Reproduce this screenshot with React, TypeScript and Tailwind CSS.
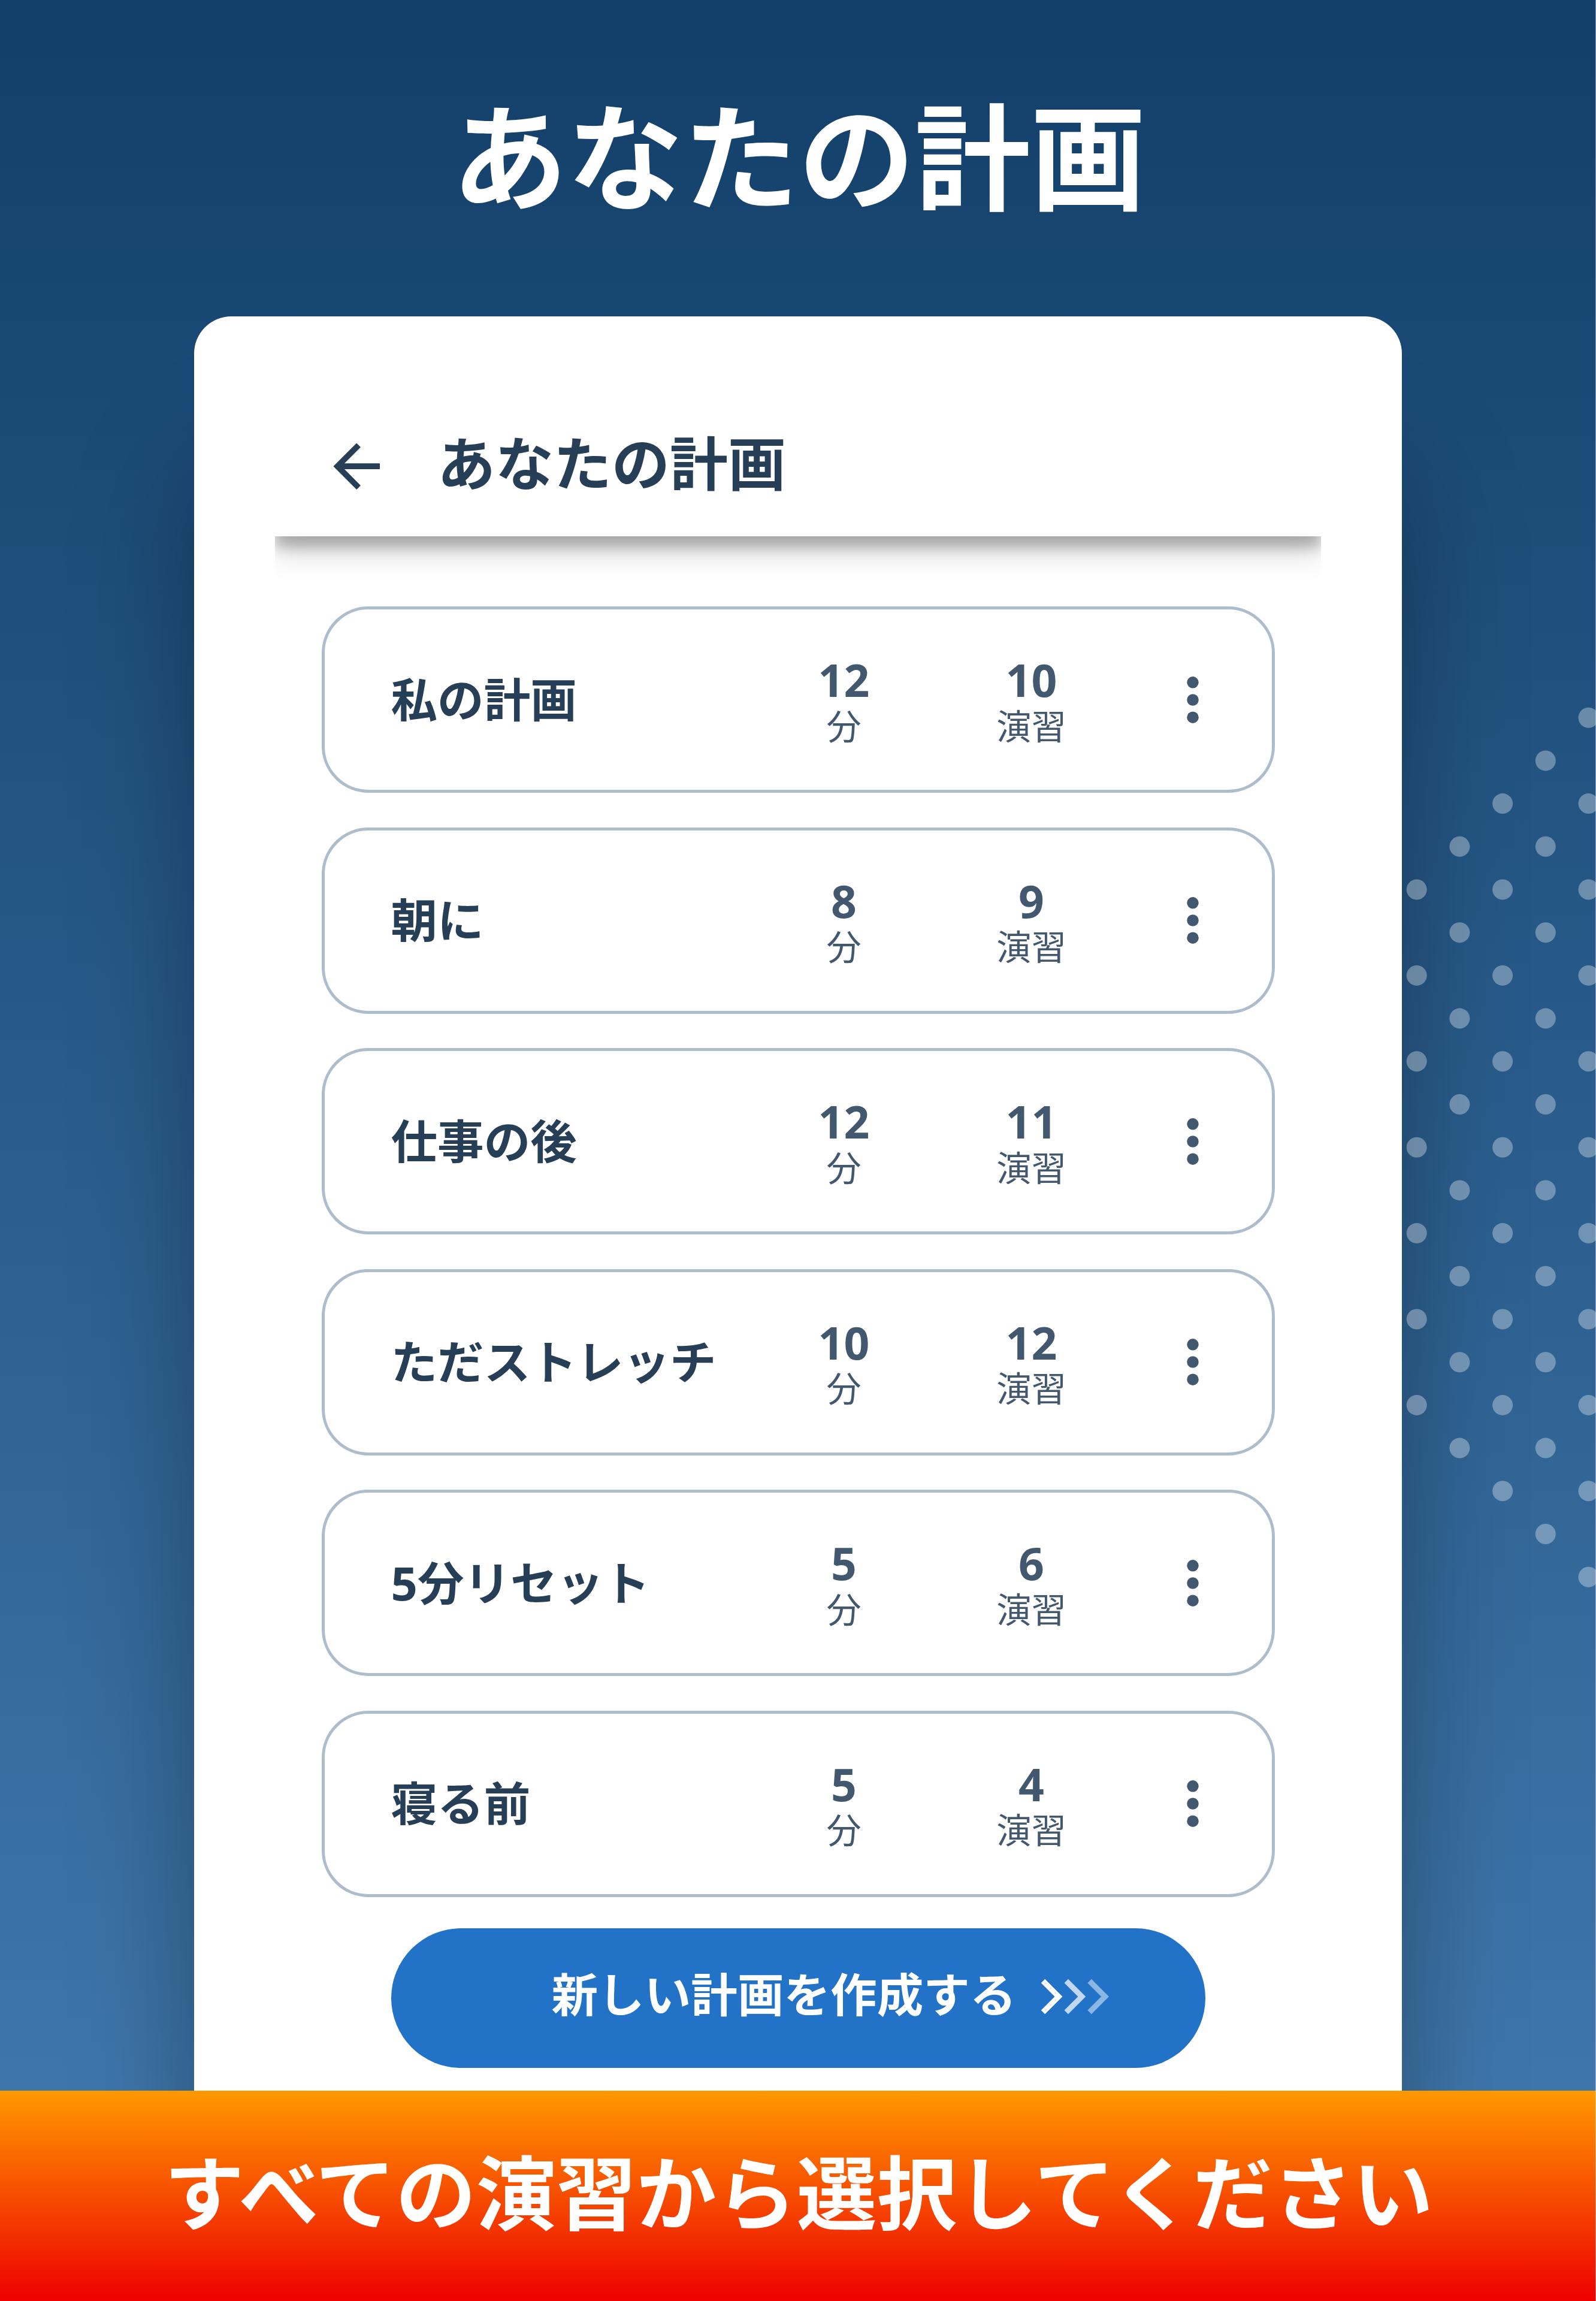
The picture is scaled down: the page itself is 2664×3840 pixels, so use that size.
import { MdArrowBack } from "react-icons/md";

type Plan = {
  name: string;
  minutes: number;
  exercises: number;
};

const PLANS: Plan[] = [
  { name: "私の計画", minutes: 12, exercises: 10 },
  { name: "朝に", minutes: 8, exercises: 9 },
  { name: "仕事の後", minutes: 12, exercises: 11 },
  { name: "ただストレッチ", minutes: 10, exercises: 12 },
  { name: "5分リセット", minutes: 5, exercises: 6 },
  { name: "寝る前", minutes: 5, exercises: 4 },
];

// Each column is one dot longer than the one to its left.
const DOT_COLUMNS = [7, 8, 9, 10, 11];
const DOT_STEP = 71.7;

export default function App() {
  return (
    <div className="relative flex h-[3840px] w-[2664px] flex-col items-center overflow-hidden bg-linear-to-b/srgb from-[#123f69] to-[#437cb1] font-['Noto_Sans','Noto_Sans_CJK_JP',sans-serif]">
      <h1 className="flex h-[528px] shrink-0 items-center pb-[4px] pl-[3px] text-[193.2px] font-bold leading-none text-white">
        あなたの計画
      </h1>

      <main className="relative flex w-[2016px] grow flex-col items-center rounded-t-[62px] bg-white shadow-[0_260px_195px_rgba(0,0,0,0.34)]">
        <PlansHeader />

        <ul className="mt-[117px] flex w-[1591px] flex-col gap-[57.5px]">
          {PLANS.map((plan) => (
            <PlanRow key={plan.name} plan={plan} />
          ))}
        </ul>

        <button
          type="button"
          className="mt-[52.5px] flex h-[233px] w-[1359px] items-center rounded-full bg-[#2272c8] pb-[6px] pl-[268px] text-[77.6px] font-bold leading-none text-white"
        >
          <span className="pb-[6px]">新しい計画を作成する</span>
          <Chevrons />
        </button>
      </main>

      <DotPattern />

      <footer className="relative flex h-[351px] w-full shrink-0 items-center justify-center bg-linear-to-b/srgb from-[#ff9900] to-[#ee0000] pb-[9px] pl-[2px] text-[133.8px] font-bold leading-none text-white">
        すべての演習から選択してください
      </footer>

      {/* Thin highlight down the right edge */}
      <div className="absolute inset-y-0 right-0 w-[1.5px] bg-white/50" />
    </div>
  );
}

function PlansHeader() {
  return (
    <header className="flex h-[367px] w-[1746px] items-center pl-[77.6px] pt-[133px] text-[#273e57] shadow-[0_18px_20px_rgba(0,0,0,0.24),0_32px_42px_rgba(0,0,0,0.14)] [clip-path:inset(0_0_-80px_0)]">
      <MdArrowBack className="size-[116.4px]" />
      <h2 className="pb-[11px] pl-[77px] text-[97px] font-bold leading-none">
        あなたの計画
      </h2>
    </header>
  );
}

function PlanRow({ plan }: { plan: Plan }) {
  return (
    <li className="flex h-[311px] items-center rounded-[78px] border-[5px] border-[#aebdcb] pl-[111px] text-[#42586e]">
      <span className="w-[599.5px] text-[77.6px] font-bold leading-none text-[#273e57]">
        {plan.name}
      </span>
      <Stat value={plan.minutes} label="分" />
      <Stat value={plan.exercises} label="演習" />
      <svg viewBox="0 0 20 78" className="ml-[103px] h-[78px] w-[20px]">
        <circle cx="10" cy="9.8" r="9.75" fill="currentColor" />
        <circle cx="10" cy="39" r="9.75" fill="currentColor" />
        <circle cx="10" cy="68.2" r="9.75" fill="currentColor" />
      </svg>
    </li>
  );
}

function Stat({ value, label }: { value: number; label: string }) {
  return (
    <div className="flex w-[313px] flex-col items-center gap-[2.6px] pt-[6px]">
      <span className="text-[75px] font-bold leading-[80px]">{value}</span>
      <span className="text-[58.2px] leading-[70px]">{label}</span>
    </div>
  );
}

function Chevrons() {
  return (
    <svg
      viewBox="0 0 114 60"
      className="ml-[41px] h-[60px] w-[114px]"
      fill="none"
      stroke="white"
      strokeWidth="9.1"
    >
      <path d="M4 4l26 26L4 56" />
      <path d="M42.8 4l26 26l-26 26" strokeOpacity="0.72" />
      <path d="M81.6 4l26 26l-26 26" strokeOpacity="0.48" />
    </svg>
  );
}

function DotPattern() {
  return (
    <svg
      viewBox="0 0 324 1480"
      className="absolute right-0 top-[1175px] h-[1480px] w-[324px]"
    >
      {DOT_COLUMNS.map((count, col) =>
        Array.from({ length: count }, (_, i) => (
          <circle
            key={`${col}-${i}`}
            cx={24.7 + col * DOT_STEP}
            cy={22.7 + (4 - col + i * 2) * DOT_STEP}
            r="17"
            fill="#ffffff"
            fillOpacity="0.33"
          />
        )),
      )}
    </svg>
  );
}
